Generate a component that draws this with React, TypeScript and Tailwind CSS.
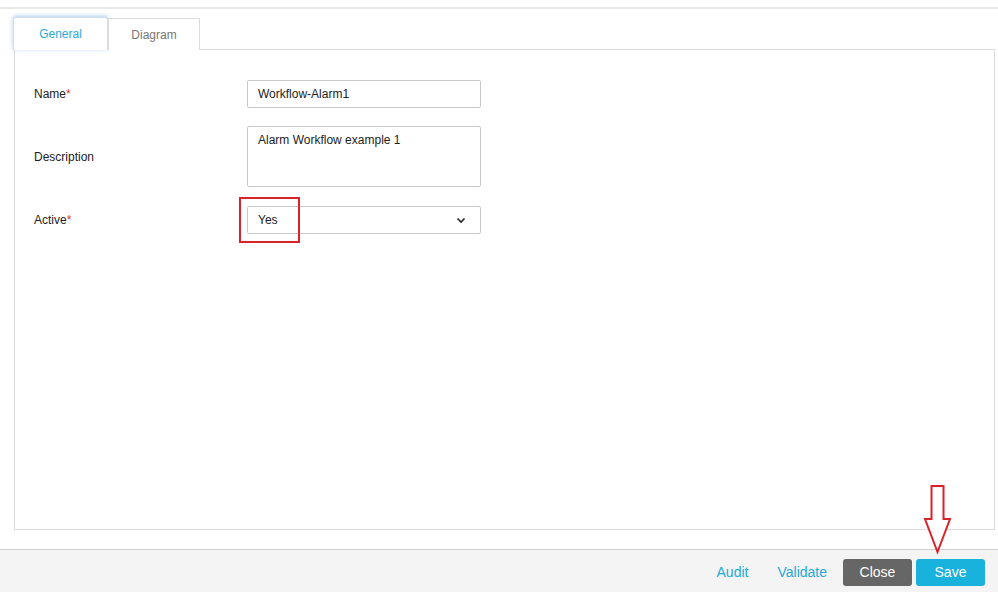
import React from 'react';

const font = { fontFamily: '"Liberation Sans", Arial, sans-serif' };

type RowProps = {
  label: string;
  required?: boolean;
  className?: string;
  children: React.ReactNode;
};

const FormRow: React.FC<RowProps> = ({ label, required, className, children }) => (
  <div className={`flex items-center ${className ?? ''}`}>
    <div className="w-[213px] shrink-0 text-[12px] text-[#222]">
      {label}
      {required && <span className="text-[#d0343a]">*</span>}
    </div>
    {children}
  </div>
);

export default function App() {
  return (
    <div style={font} className="relative w-full h-[592px] bg-white flex flex-col overflow-hidden">
      {/* top divider */}
      <div className="mt-[7px] h-[2px] bg-[#e8e8e8]" />

      {/* tabs */}
      <div className="mt-[8px] ml-[13px] flex items-end relative z-10">
        <div className="w-[95px] h-[33px] bg-white border border-b-0 border-[#cfdff0] rounded-t-[3px] shadow-[0_-1px_4px_rgba(70,140,215,0.45)] flex items-center justify-center text-[12px] text-[#2aaad6]">
          General
        </div>
        <div className="w-[92px] h-[32px] bg-white border border-b-0 border-[#dcdcdc] flex items-center justify-center text-[12px] text-[#777]">
          Diagram
        </div>
      </div>

      {/* panel */}
      <div className="ml-[14px] mr-[3px] -mt-[1px] h-[481px] border border-[#dcdcdc] bg-white pt-[30px] pl-[19px] flex flex-col gap-[18px]">
        <FormRow label="Name" required>
          <div className="w-[234px] h-[28px] border border-[#c8c8c8] rounded-[2px] px-[10px] flex items-center text-[12px] text-[#222]">
            Workflow-Alarm1
          </div>
        </FormRow>
        <FormRow label="Description">
          <div className="w-[234px] h-[61px] border border-[#c8c8c8] rounded-[2px] px-[10px] pt-[4px] text-[12px] text-[#222]">
            Alarm Workflow example 1
          </div>
        </FormRow>
        <FormRow label="Active" required className="mt-[1px]">
          <div className="relative w-[234px] h-[28px] border border-[#c8c8c8] rounded-[2px] px-[10px] flex items-center justify-between text-[12px] text-[#222]">
            <span>Yes</span>
            <svg width="10" height="7" viewBox="0 0 10 7" className="mr-[4px]">
              <path d="M1.5 1.5 L5 5 L8.5 1.5" fill="none" stroke="#222" strokeWidth="1.6" />
            </svg>
            {/* highlight box */}
            <div className="absolute -left-[9px] -top-[10px] w-[61px] h-[46px] border-2 border-[#d9232b]" />
          </div>
        </FormRow>
      </div>

      {/* footer */}
      <div className="mt-auto h-[43px] border-t border-[#cfcfcf] bg-[#f4f4f4] flex items-start justify-end pt-[9px] pr-[13px]">
        <button className="h-[27px] mr-[29px] text-[14px] text-[#1fa9d6]">Audit</button>
        <button className="h-[27px] mr-[16px] text-[14px] text-[#1fa9d6]">Validate</button>
        <button className="w-[69px] h-[27px] mr-[4px] rounded-[3px] bg-[#666666] text-white text-[14px]">Close</button>
        <button className="w-[69px] h-[27px] rounded-[3px] bg-[#18b2dc] text-white text-[14px]">Save</button>
      </div>

      {/* red arrow pointing at Save */}
      <svg
        className="absolute left-[923px] top-[484px] pointer-events-none"
        width="30"
        height="71"
        viewBox="0 0 30 71"
      >
        <path
          d="M8.5 2 H20.5 V35 H27 L14.5 68 L2 35 H8.5 Z"
          fill="white"
          stroke="#d9232b"
          strokeWidth="2"
          strokeLinejoin="miter"
        />
      </svg>
    </div>
  );
}
